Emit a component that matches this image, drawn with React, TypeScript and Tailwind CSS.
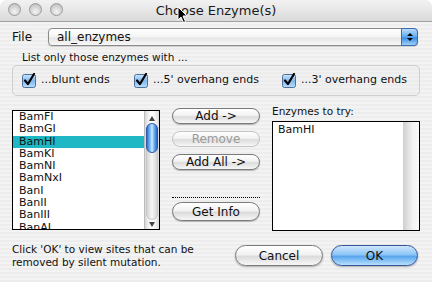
import React from "react";

const items = ["BamFI", "BamGI", "BamHI", "BamKI", "BamNI", "BamNxI", "BanI", "BanII", "BanIII", "BanAI"];

function Check({ label }: { label: string }) {
  return (
    <div className="flex items-center gap-[4px]">
      <svg width="15" height="15" viewBox="0 0 15 15">
        <defs>
          <linearGradient id="cb" x1="0" y1="0" x2="0" y2="1">
            <stop offset="0" stopColor="#cfe6fb" />
            <stop offset="0.5" stopColor="#7fb9ee" />
            <stop offset="1" stopColor="#bde0fb" />
          </linearGradient>
        </defs>
        <rect x="0.5" y="1.5" width="13" height="13" rx="2" fill="url(#cb)" stroke="#4d6f9c" />
        <path d="M3 7.5 L6 11 L12 1" fill="none" stroke="#000" strokeWidth="2.2" strokeLinecap="round" strokeLinejoin="round" />
      </svg>
      <span>{label}</span>
    </div>
  );
}

function SmallBtn({ label, disabled, tall }: { label: string; disabled?: boolean; tall?: boolean }) {
  return (
    <div
      className={
        (tall ? "h-[19px] " : "h-[16px] ") +
        "w-[88px] rounded-full border flex items-center justify-center text-[12px] leading-none bg-[linear-gradient(#ffffff,#f2f2f2_45%,#dcdcdc_55%,#f7f7f7)] " +
        (disabled ? "border-[#c4c4c4] text-[#9a9a9a]" : "border-[#7a7a7a] text-[#111] shadow-[0_1px_1px_rgba(0,0,0,0.25)]")
      }
    >
      {label}
    </div>
  );
}

export default function App() {
  return (
    <div className="w-[432px] h-[282px] overflow-hidden bg-white">
      <div className="relative w-[432px] h-[282px] rounded-t-[7px] overflow-hidden bg-[repeating-linear-gradient(#ededed_0px,#ededed_2px,#f3f3f3_2px,#f3f3f3_4px)] font-['DejaVu_Sans',sans-serif] text-[11px] text-[#111]">
        {/* title bar */}
        <div className="h-[22px] relative flex items-center justify-center border-b border-[#a0a0a0] bg-[linear-gradient(#f2f2f2,#dadada)]">
          <div className="absolute left-[8px] top-[3px] flex gap-[8px]">
            {[0, 1, 2].map((i) => (
              <div key={i} className="w-[13px] h-[13px] rounded-full border border-[#9a9a9a] bg-[radial-gradient(circle_at_50%_70%,#f4f4f4,#c9c9c9_70%,#b0b0b0)]" />
            ))}
          </div>
          <span className="text-[13px] text-[#1a1a1a]">Choose Enzyme(s)</span>
          <svg className="absolute left-[177px] top-[6px]" width="12" height="18" viewBox="0 0 12 18">
            <path d="M1 1 L1 14 L4 11 L6.5 16.5 L8.5 15.5 L6 10 L10 10 Z" fill="#000" stroke="#fff" strokeWidth="1" />
          </svg>
        </div>

        <div className="pl-[12px] pr-[12px]">
          {/* File row */}
          <div className="mt-[6px] flex items-center h-[18px]">
            <span className="w-[36px] text-[12px]">File</span>
            <div className="relative h-[18px] w-[370px] rounded-[4px] border border-[#8a8a8a] bg-[linear-gradient(#ffffff,#f4f4f4_50%,#e6e6e6_55%,#f8f8f8)] flex items-center pl-[8px] text-[12px] shadow-[0_1px_1px_rgba(0,0,0,0.15)]">
              all_enzymes
              <div className="absolute right-[-1px] top-[-1px] h-[18px] w-[17px] rounded-r-[4px] border border-[#3d6bb0] bg-[linear-gradient(#b9dcfb,#5ea8ec_50%,#3b8be0_55%,#9ed1fb)] flex flex-col items-center justify-center gap-[2px]">
                <div className="w-0 h-0 border-l-[3px] border-r-[3px] border-b-[3px] border-l-transparent border-r-transparent border-b-black" />
                <div className="w-0 h-0 border-l-[3px] border-r-[3px] border-t-[3px] border-l-transparent border-r-transparent border-t-black" />
              </div>
            </div>
          </div>

          <div className="mt-[5px] ml-[10px] text-[10.5px] leading-[13px]">List only those enzymes with ...</div>

          <div className="mt-[1px] h-[31px] w-[408px] rounded-[5px] border border-[#cfcfcf] bg-[#ececec]/40 flex items-center pl-[9px] gap-0">
            <div className="w-[112px]"><Check label="...blunt ends" /></div>
            <div className="w-[148px]"><Check label="...5' overhang ends" /></div>
            <Check label="...3' overhang ends" />
          </div>

          {/* middle */}
          <div className="flex mt-[8px]">
            <div className="mt-[6px] w-[148px] h-[120px] border border-black bg-white flex">
              <div className="flex-1 overflow-hidden">
                {items.map((it) => (
                  <div key={it} className={"h-[12.3px] leading-[12.3px] pl-[6px] text-[11px] " + (it === "BamHI" ? "bg-[#1fb7c3]" : "")}>
                    {it}
                  </div>
                ))}
              </div>
              <div className="w-[15px] h-full relative bg-[linear-gradient(90deg,#d8d8d8,#ffffff_40%,#ffffff_60%,#dcdcdc)] border-l border-[#bbb]">
                <div className="absolute left-[4px] top-[5px] w-0 h-0 border-l-[3px] border-r-[3px] border-b-[5px] border-l-transparent border-r-transparent border-b-[#444]" />
                <div className="absolute left-[1px] top-[13px] w-[12px] h-[96px] rounded-full bg-[linear-gradient(90deg,#d4d4d4,#f6f6f6_50%,#d4d4d4)] border border-[#c8c8c8]" />
                <div className="absolute left-[1px] top-[12px] w-[12px] h-[30px] rounded-full border border-[#2b5aa8] bg-[linear-gradient(90deg,#2d6fd0,#8cc4f8_35%,#cfe9ff_50%,#6fb1f2_70%,#2b6bcc)]" />
                <div className="absolute left-[4px] bottom-[2px] w-0 h-0 border-l-[3px] border-r-[3px] border-t-[5px] border-l-transparent border-r-transparent border-t-[#444]" />
              </div>
            </div>

            <div className="ml-[12px] w-[88px] flex flex-col mt-[4px]">
              <SmallBtn label="Add ->" />
              <div className="mt-[7px]"><SmallBtn label="Remove" disabled /></div>
              <div className="mt-[7px]"><SmallBtn label="Add All ->" /></div>
              <div className="mt-[27px] border-t border-dotted border-black" />
              <div className="mt-[4px]"><SmallBtn label="Get Info" tall /></div>
            </div>

            <div className="ml-[12px] w-[148px] flex flex-col">
              <div className="text-[10.5px] leading-[13px] h-[17px] pt-[1px]">Enzymes to try:</div>
              <div className="h-[110px] border border-black bg-white flex">
                <div className="flex-1 pl-[5px] pt-[1px] text-[11px] leading-[13px]">BamHI</div>
                <div className="w-[16px] bg-[linear-gradient(90deg,#cfcfcf,#f2f2f2_60%,#fafafa)]" />
              </div>
            </div>
          </div>

          {/* bottom */}
          <div className="flex mt-[7px]">
            <div className="w-[200px] text-[10.5px] leading-[13px] pt-[5px]">
              Click 'OK' to view sites that can be
              <br />
              removed by silent mutation.
            </div>
            <div className="ml-[23px] mt-[7px] flex gap-[8px]">
              <div className="h-[21px] w-[88px] rounded-full border border-[#7a7a7a] bg-[linear-gradient(#ffffff,#f2f2f2_45%,#dcdcdc_55%,#f7f7f7)] flex items-center justify-center text-[12px] shadow-[0_1px_2px_rgba(0,0,0,0.3)]">
                Cancel
              </div>
              <div className="h-[21px] w-[87px] rounded-full border border-[#34559a] bg-[linear-gradient(#cfe6fc,#8ec5f6_45%,#5aa6ee_55%,#b8e0fd)] flex items-center justify-center text-[12px] shadow-[0_1px_2px_rgba(0,0,0,0.3)]">
                OK
              </div>
            </div>
          </div>
        </div>
      </div>
    </div>
  );
}
